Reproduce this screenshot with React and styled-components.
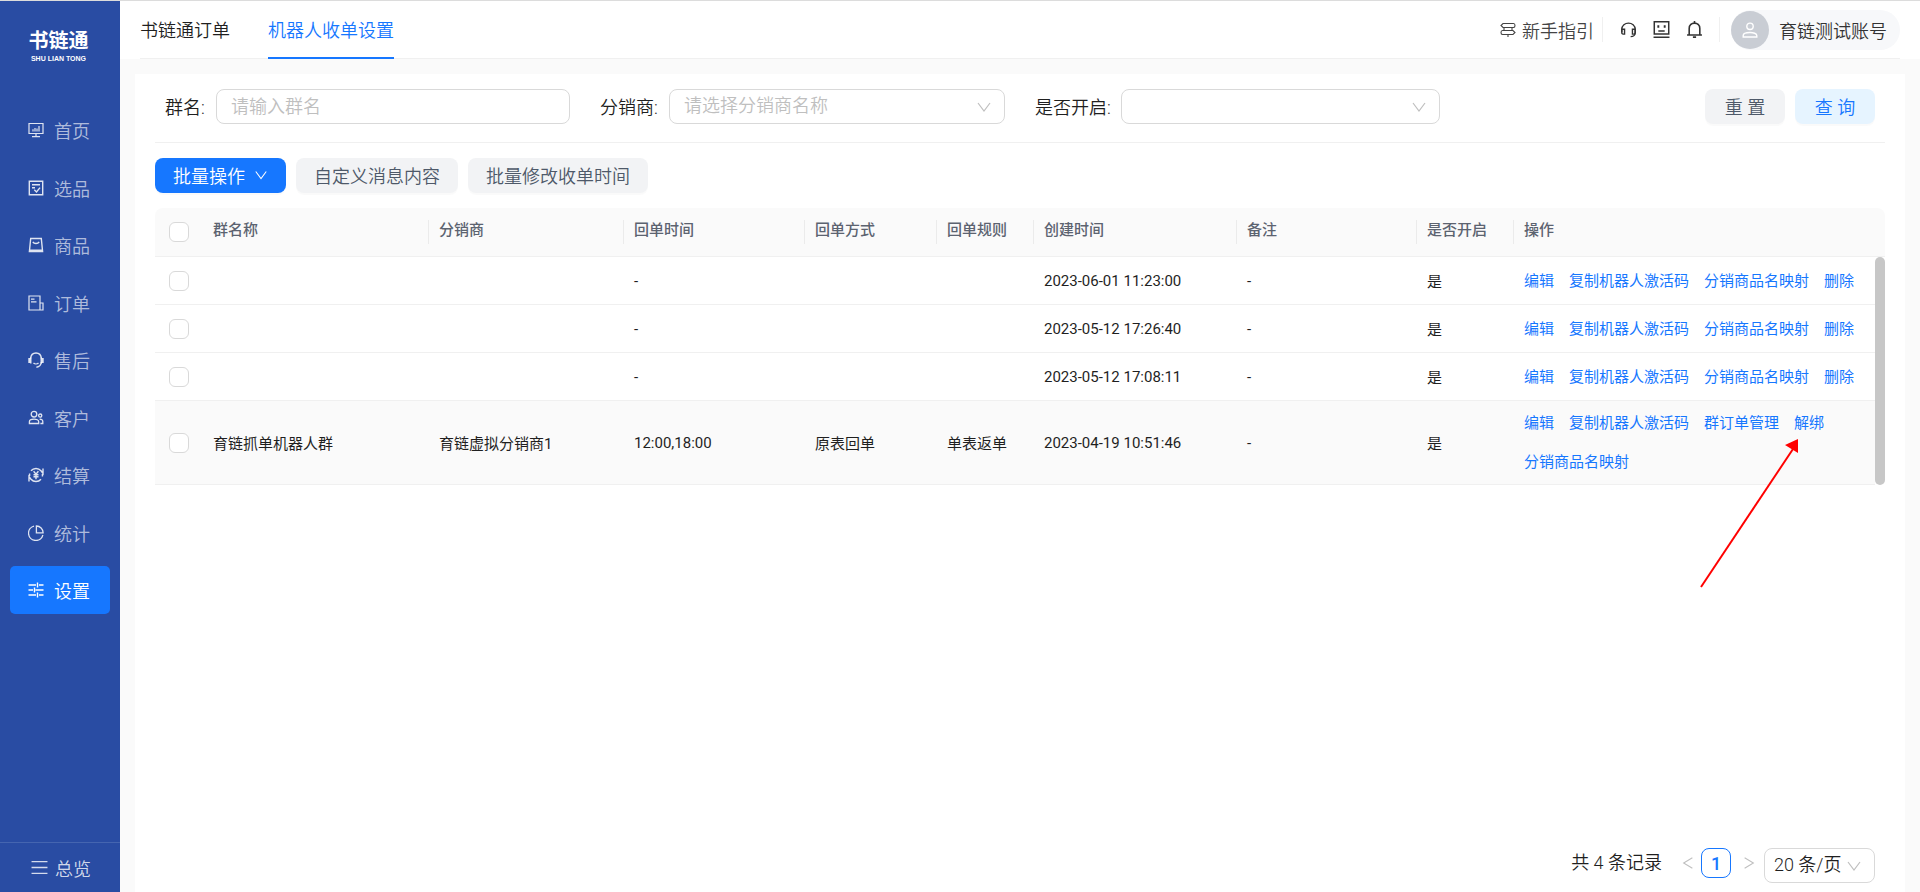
import React from 'react';
import styled, { createGlobalStyle } from 'styled-components';

const GlobalStyle = createGlobalStyle`
    * {
        box-sizing: border-box;
    }
    body {
        margin: 0;
        background: #fafafa;
        color: #1f1f1f;
        font-family: Roboto, "Noto Sans CJK SC", sans-serif;
        font-size: 18px;
        font-weight: 350;
    }
    a {
        color: inherit;
        text-decoration: none;
    }
    button, input, select {
        font: inherit;
        color: inherit;
    }
    svg {
        display: block;
        flex: none;
    }
`;

const Page = styled.div`
    display: flex;
    min-height: 100vh;
    border-top: 1px solid #dcdcdc;
`;

const Sidebar = styled.aside`
    flex: none;
    width: 120px;
    display: flex;
    flex-direction: column;
    background: #294ca3;
    color: rgba(255, 255, 255, 0.65);
`;

const Logo = styled.div`
    height: 105px;
    padding: 26px 3px 0 0;
    color: #fff;
    text-align: center;
    font-size: 20px;
    line-height: 28px;
    font-weight: 700;
`;

const LogoSub = styled.div`
    font-family: "Liberation Sans", sans-serif;
    font-size: 7px;
    line-height: 8px;
`;

const Menu = styled.nav`
    height: 508px;
    padding: 0 10px;
    display: flex;
    flex-direction: column;
    justify-content: space-between;
`;

const MenuItem = styled.a`
    display: flex;
    align-items: center;
    gap: 10px;
    height: 48px;
    padding-left: 18px;
    border-radius: 5px;
    background: ${props => (props.$active ? '#1677ff' : 'transparent')};
    color: ${props => (props.$active ? '#fff' : 'inherit')};
    svg {
        color: ${props => (props.$active ? '#fff' : 'rgba(255, 255, 255, 0.85)')};
    }
`;

const Overview = styled.button`
    margin-top: auto;
    height: 50px;
    padding: 0 0 0 31px;
    display: flex;
    align-items: center;
    gap: 7px;
    border: 0;
    border-top: 1px solid #4565b0;
    background: none;
    color: rgba(255, 255, 255, 0.8);
`;

const Main = styled.div`
    position: relative;
    flex: 1;
    min-width: 0;
    display: flex;
    flex-direction: column;
`;

const Header = styled.header`
    background: #fff;
    padding: 0 20px;
`;

const HeaderInner = styled.div`
    display: flex;
    justify-content: space-between;
    align-items: center;
    height: 58px;
    border-bottom: 1px solid #f0f0f0;
`;

const Tabs = styled.nav`
    display: flex;
    gap: 38px;
    align-self: flex-start;
`;

const Tab = styled.a`
    height: 58px;
    line-height: 60px;
    color: ${props => (props.$active ? '#1677ff' : '#1f1f1f')};
    box-shadow: ${props => (props.$active ? 'inset 0 -2px #1677ff' : 'none')};
`;

const HeaderTools = styled.div`
    display: flex;
    align-items: center;
    color: #333;
`;

const Guide = styled.a`
    display: flex;
    align-items: center;
    gap: 6px;
    color: #444;
`;

const Separator = styled.span`
    width: 1px;
    height: 25px;
    background: #f0f0f0;
    margin: 0 ${props => props.$after}px 0 8px;
`;

const IconRow = styled.div`
    display: flex;
    gap: 16px;
    margin-right: 8px;
`;

const IconButton = styled.button`
    padding: 0;
    border: 0;
    background: none;
`;

const Account = styled.button`
    display: flex;
    align-items: center;
    gap: 10px;
    height: 40px;
    padding: 0 13px 0 0;
    border: 0;
    border-radius: 20px;
    background: #f7f8fa;
`;

const Avatar = styled.span`
    display: grid;
    place-items: center;
    width: 38px;
    height: 38px;
    border-radius: 50%;
    background: #c9cdd4;
    color: #fff;
`;

const Card = styled.main`
    flex: 1;
    display: flex;
    flex-direction: column;
    margin: 15px 15px 0;
    padding: 15px 20px 9px;
    background: #fff;
`;

const Search = styled.form`
    display: flex;
    align-items: center;
    padding: 0 10px 18px;
    border-bottom: 1px solid #f0f0f0;
`;

const Field = styled.div`
    display: flex;
    align-items: center;
    flex: 0 1 ${props => props.$width}px;
    min-width: 0;
    margin-right: 30px;
`;

const Label = styled.label`
    flex: none;
    width: ${props => props.$width}px;
    padding-bottom: 2px;
    white-space: nowrap;
`;

const TextInput = styled.input`
    flex: 1;
    min-width: 0;
    height: 35px;
    padding: 0 14px;
    border: 1px solid #d9d9d9;
    border-radius: 8px;
    background: #fff;
    outline: none;
    &::placeholder {
        color: #bfbfbf;
    }
`;

const SelectBox = styled.div`
    flex: ${props => (props.$width ? 'none' : '1')};
    width: ${props => (props.$width ? `${props.$width}px` : 'auto')};
    min-width: 0;
    display: grid;
    align-items: center;
    select, svg {
        grid-area: 1 / 1;
    }
    select {
        width: 100%;
        height: 35px;
        padding: 0 ${props => (props.$width ? 9 : 14)}px 2px;
        appearance: none;
        border: 1px solid #d9d9d9;
        border-radius: 8px;
        background: #fff;
        color: ${props => (props.$width ? '#1f1f1f' : '#bfbfbf')};
    }
    svg {
        justify-self: end;
        margin-right: 13px;
        color: #bfbfbf;
        pointer-events: none;
    }
`;

const ButtonRow = styled.div`
    display: flex;
    gap: 10px;
    margin-left: auto;
`;

const Toolbar = styled.div`
    display: flex;
    gap: 10px;
    padding: 15px 0;
`;

const colors = {
    primary: ['#1677ff', '#fff'],
    light: ['#e6f4ff', '#1677ff'],
    plain: ['#f2f3f5', '#4e5969'],
};

const Button = styled.button`
    display: flex;
    align-items: center;
    justify-content: center;
    gap: 9px;
    min-width: 80px;
    height: 35px;
    padding: 0 18px 2px;
    border: 0;
    border-radius: 8px;
    background: ${props => colors[props.$kind][0]};
    color: ${props => colors[props.$kind][1]};
    box-shadow: 0 2px 0 rgba(0, 0, 0, 0.02);
    white-space: nowrap;
`;

const TableFrame = styled.div`
    display: grid;
    grid-template-columns: 1fr 10px;
    font-size: 15px;
    font-weight: 400;
`;

const Table = styled.table`
    width: 100%;
    table-layout: fixed;
    border-collapse: separate;
    border-spacing: 0;
    th, td {
        padding: 0 10px;
        text-align: left;
        border-bottom: 1px solid #f0f0f0;
    }
    th {
        height: 49px;
        background: #fafafa;
        color: #5c6370;
        font-weight: 500;
    }
    th:first-child {
        border-top-left-radius: 8px;
    }
    td {
        height: 48px;
    }
    th:first-child, td:first-child {
        padding: 0 0 0 14px;
    }
`;

const HeadCell = styled.div`
    height: 24px;
    line-height: 21px;
    margin-right: -10px;
    border-right: 1px solid ${props => (props.$last ? 'transparent' : '#ebebeb')};
`;

const Row = styled.tr`
    background: ${props => (props.$hover ? '#fafafa' : '#fff')};
`;

const Checkbox = styled.input`
    display: block;
    appearance: none;
    width: 20px;
    height: 20px;
    margin: 0;
    border: 1px solid #d9d9d9;
    border-radius: 6px;
    background: #fff;
    &:checked {
        background: #1677ff;
    }
`;

const Actions = styled.div`
    display: flex;
    flex-wrap: wrap;
    gap: 15px;
    padding: 10px 0;
    line-height: 24px;
    color: #1677ff;
`;

const Gutter = styled.div`
    display: flex;
    flex-direction: column;
`;

const GutterHead = styled.div`
    height: 49px;
    background: #fafafa;
    border-bottom: 1px solid #f0f0f0;
    border-top-right-radius: 8px;
`;

const Thumb = styled.div`
    flex: 1;
    border-radius: 5px;
    background: #c7c7c7;
`;

const Pagination = styled.footer`
    display: flex;
    align-items: flex-start;
    justify-content: flex-end;
    margin-top: auto;
    padding-right: 10px;
    line-height: 30px;
`;

const PageArrow = styled.button`
    display: grid;
    place-items: center;
    width: 10px;
    height: 30px;
    padding: 0;
    border: 0;
    background: none;
    color: #bfbfbf;
`;

const PageNumber = styled.button`
    width: 30px;
    height: 30px;
    margin: 0 11px 0 10px;
    padding: 0;
    border: 1px solid #1677ff;
    border-radius: 8px;
    background: #fff;
    color: #1677ff;
    font-weight: 500;
`;

const Total = styled.span`
    margin-right: 19px;
`;

const PageSize = styled.div`
    margin-left: 12px;
`;

// 指向“解绑”的标注箭头，浮在表格之上
const Pointer = styled.svg`
    position: absolute;
    top: 436px;
    right: 120px;
    pointer-events: none;
`;

const Icon = ({ size = 16, width = 1.2, children }) => (
    <svg width={size} height={size} viewBox="0 0 16 16" fill="none" stroke="currentColor" strokeWidth={width} aria-hidden="true">
        {children}
    </svg>
);

const Chevron = ({ size = 16, d = 'M2 4l6 8 6-8' }) => (
    <Icon size={size}><path d={d} /></Icon>
);

const icons = {
    home: (
        <Icon>
            <path d="M1 1.5h14v10H1zM8 11.5v3M4 14.6h8M5 9.5V7.3M7 9.5V6M9 9.5V6.6M11 9.5V4" />
        </Icon>
    ),
    pick: (
        <Icon width={1.4}>
            <path d="M1.3 1.3h13.4v13.4H1.3zM4 4.8h8M4 7.8h3M6.3 9.8l2.2 2.2L12 7.6" />
        </Icon>
    ),
    goods: (
        <Icon width={1.4}>
            <path d="M2.7 1.5h10.6l1.3 13H1.4zM1.4 13.2h13.2M4.8 4.8c1.4 2.3 5 2.3 6.4 0" />
        </Icon>
    ),
    order: (
        <Icon>
            <path d="M1 1h11v14H1zM12 8h3v7h-3M3 4.2h3.5M3 6.8h5.5" />
        </Icon>
    ),
    service: (
        <Icon width={1.4}>
            <path d="M2.6 6.5C3.2-.9 12.8-.9 13.4 6.5M13.4 10c-.3 3-2.2 4.8-5 5.3M5.5 11c1.3 1.2 3.7 1.2 5 0" />
            <path d="M1.4 6v5M14.6 6v5" strokeWidth="2.2" />
            <path d="M2.8 5.5v6M13.2 5.5v6" />
        </Icon>
    ),
    customer: (
        <Icon width={1.3}>
            <circle cx="6" cy="4.2" r="2.8" />
            <path d="M1.4 13.5v-1.8c0-3.4 9.3-3.4 9.3 0v1.8z" />
            <circle cx="12.2" cy="5.6" r="1.6" />
            <path d="M11.6 9.3c2-.2 3.2.7 3.2 2.2v2h-2.4" />
        </Icon>
    ),
    settle: (
        <Icon width={1.4}>
            <path d="M3 3.8A6.6 6.6 0 0 1 13 3.8L15 6.5V1.5M13 12.2A6.6 6.6 0 0 1 3 12.2L1 9.5V14.5M1.6 9V6.5M14.4 7V9.5" />
            <path d="M5.6 4.3L8 7.2l2.4-2.9M8 7.2v5M5.5 7.7h5M5.5 9.8h5" />
        </Icon>
    ),
    stats: (
        <Icon width={1.3}>
            <path d="M6 1.1A7.3 7.3 0 1 0 14.9 10" />
            <path d="M8.4 1v6.8h6.7A6.8 6.8 0 0 0 8.4 1z" />
        </Icon>
    ),
    setting: (
        <Icon width={1.4}>
            <path d="M.5 3H8M11 3h4.500M9.500.5v5M.5 8H5M7.500 8h8M6.500 5.500v5M.5 13H8M11 13h4.500M9.500 10.500v5" />
        </Icon>
    ),
};

const menus = [
    { icon: 'home', text: '首页' },
    { icon: 'pick', text: '选品' },
    { icon: 'goods', text: '商品' },
    { icon: 'order', text: '订单' },
    { icon: 'service', text: '售后' },
    { icon: 'customer', text: '客户' },
    { icon: 'settle', text: '结算' },
    { icon: 'stats', text: '统计' },
    { icon: 'setting', text: '设置', active: true },
];

const columns = [
    { title: '群名称', width: 226 },
    { title: '分销商', width: 195 },
    { title: '回单时间', width: 181 },
    { title: '回单方式', width: 132 },
    { title: '回单规则', width: 97 },
    { title: '创建时间', width: 203 },
    { title: '备注', width: 180 },
    { title: '是否开启', width: 97 },
    { title: '操作', width: 361 },
];

const defaultActions = ['编辑', '复制机器人激活码', '分销商品名映射', '删除'];

const rows = [
    { cells: ['', '', '-', '', '', '2023-06-01 11:23:00', '-', '是'], actions: defaultActions },
    { cells: ['', '', '-', '', '', '2023-05-12 17:26:40', '-', '是'], actions: defaultActions },
    { cells: ['', '', '-', '', '', '2023-05-12 17:08:11', '-', '是'], actions: defaultActions },
    {
        cells: ['育链抓单机器人群', '育链虚拟分销商1', '12:00,18:00', '原表回单', '单表返单', '2023-04-19 10:51:46', '-', '是'],
        actions: ['编辑', '复制机器人激活码', '群订单管理', '解绑', '分销商品名映射'],
        hover: true,
    },
];

const SideNav = () => (
    <Sidebar>
        <Logo>
            书链通
            <LogoSub>SHU LIAN TONG</LogoSub>
        </Logo>
        <Menu>
            {menus.map(item => (
                <MenuItem href="#" key={item.text} $active={item.active}>
                    {icons[item.icon]}
                    {item.text}
                </MenuItem>
            ))}
        </Menu>
        <Overview type="button">
            <Icon size={17}><path d="M.5 2.5h15M.5 8h15M.5 13.5h15" /></Icon>
            总览
        </Overview>
    </Sidebar>
);

const TopBar = () => (
    <Header>
        <HeaderInner>
            <Tabs>
                <Tab href="#">书链通订单</Tab>
                <Tab href="#" $active>机器人收单设置</Tab>
            </Tabs>
            <HeaderTools>
                <Guide href="#">
                    <Icon width={1.1}>
                        <path d="M3 1.5h10.500q1.500 0 1.500 2t-1.500 2H3l-2-2zM13 8.5H2.500Q1 8.500 1 10.500t1.500 2H13l2-2zM4 5.5v3M12 5.500v3M8 12.5V15" />
                    </Icon>
                    新手指引
                </Guide>
                <Separator $after={17} />
                <IconRow>
                    <IconButton type="button" aria-label="客服">
                        <Icon size={17} width={1.3}>
                            <path d="M1.7 10.5V8c0-8 12.600-8 12.600 0v3c0 2.300-1.500 3.700-4.300 3.700" />
                            <path d="M1.7 7.8h2.6v4.5H3c-1 0-1.3-.6-1.3-1.5zM14.3 7.8h-2.6v4.5H13c1 0 1.3-.6 1.3-1.5z" />
                        </Icon>
                    </IconButton>
                    <IconButton type="button" aria-label="机器人">
                        <Icon size={17} width={1.4}>
                            <path d="M1.2.8h13.6v11.4H1.2zM.5 15.2h15M5 9.3h6" />
                            <path d="M5 4v2.3M11 4v2.3" strokeWidth="1.8" />
                        </Icon>
                    </IconButton>
                    <IconButton type="button" aria-label="消息">
                        <Icon size={17} width={1.5}>
                            <path d="M3 13V7c0-6.7 10-6.7 10 0v6M1 13.2h14M6.5 15.2h3M8 0v2" />
                        </Icon>
                    </IconButton>
                </IconRow>
                <Separator $after={11} />
                <Account type="button">
                    <Avatar>
                        <Icon width={1.4}>
                            <circle cx="8" cy="4.3" r="3.2" />
                            <path d="M1.2 15v-1.5c0-4 13.6-4 13.6 0V15z" />
                        </Icon>
                    </Avatar>
                    育链测试账号
                </Account>
            </HeaderTools>
        </HeaderInner>
    </Header>
);

const SearchForm = () => (
    <Search>
        <Field $width={405}>
            <Label htmlFor="groupName" $width={51}>群名:</Label>
            <TextInput id="groupName" placeholder="请输入群名" />
        </Field>
        <Field $width={405}>
            <Label htmlFor="dealer" $width={69}>分销商:</Label>
            <SelectBox>
                <select id="dealer">
                    <option>请选择分销商名称</option>
                </select>
                <Chevron />
            </SelectBox>
        </Field>
        <Field $width={405}>
            <Label htmlFor="enabled" $width={86}>是否开启:</Label>
            <SelectBox>
                <select id="enabled">
                    <option></option>
                </select>
                <Chevron />
            </SelectBox>
        </Field>
        <ButtonRow>
            <Button type="reset" $kind="plain">重 置</Button>
            <Button type="button" $kind="light">查 询</Button>
        </ButtonRow>
    </Search>
);

const GroupTable = () => (
    <TableFrame>
        <Table>
            <colgroup>
                <col width={48} />
                {columns.map(col => <col key={col.title} width={col.width} />)}
            </colgroup>
            <thead>
                <tr>
                    <th><Checkbox type="checkbox" aria-label="全选" /></th>
                    {columns.map((col, i) => (
                        <th key={col.title}>
                            <HeadCell $last={i === columns.length - 1}>{col.title}</HeadCell>
                        </th>
                    ))}
                </tr>
            </thead>
            <tbody>
                {rows.map((row, i) => (
                    <Row key={i} $hover={row.hover}>
                        <td><Checkbox type="checkbox" aria-label={`选择第${i + 1}行`} /></td>
                        {row.cells.map((cell, j) => <td key={j}>{cell}</td>)}
                        <td>
                            <Actions>
                                {row.actions.map(text => <a href="#" key={text}>{text}</a>)}
                            </Actions>
                        </td>
                    </Row>
                ))}
            </tbody>
        </Table>
        <Gutter>
            <GutterHead />
            <Thumb />
        </Gutter>
    </TableFrame>
);

class App extends React.Component {
    render() {
        return (
            <Page>
                <GlobalStyle />
                <SideNav />
                <Main>
                    <TopBar />
                    <Card>
                        <SearchForm />
                        <Toolbar>
                            <Button type="button" $kind="primary">
                                批量操作
                                <Chevron size={14} />
                            </Button>
                            <Button type="button" $kind="plain">自定义消息内容</Button>
                            <Button type="button" $kind="plain">批量修改收单时间</Button>
                        </Toolbar>
                        <GroupTable />
                        <Pagination>
                            <Total>共 4 条记录</Total>
                            <PageArrow type="button" aria-label="上一页"><Chevron d="M13 2L3 8l10 6" size={14} /></PageArrow>
                            <PageNumber type="button">1</PageNumber>
                            <PageArrow type="button" aria-label="下一页"><Chevron d="M3 2l10 6-10 6" size={14} /></PageArrow>
                            <PageSize>
                                <SelectBox $width={111}>
                                    <select aria-label="每页条数">
                                        <option>20 条/页</option>
                                    </select>
                                    <Chevron />
                                </SelectBox>
                            </PageSize>
                        </Pagination>
                    </Card>
                    <Pointer width="100" height="152" viewBox="0 0 100 152" aria-hidden="true">
                        <path d="M1 150L93 12" stroke="#f00" strokeWidth="2" />
                        <path d="M98 2v14L85 8z" fill="#f00" />
                    </Pointer>
                </Main>
            </Page>
        );
    }
}

export default App;
